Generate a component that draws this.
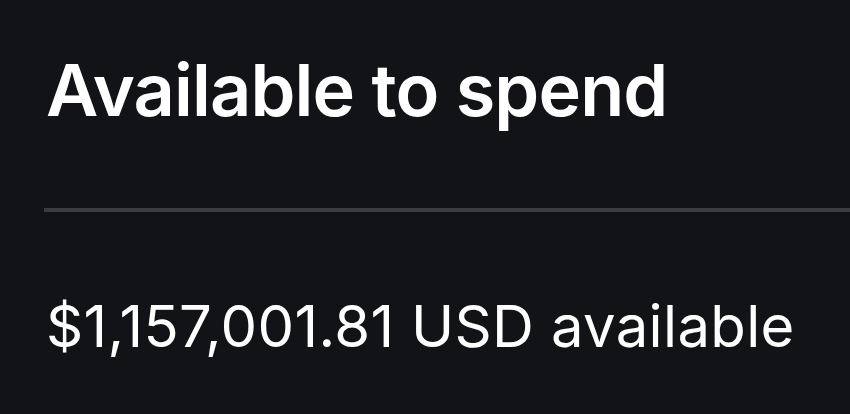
export default function App() {
  return (
    <div className="w-[850px] h-[414px] bg-[#111317] text-white overflow-hidden" style={{ fontFamily: "Inter, sans-serif" }}>
      <div className="pl-[46px] pt-[50px]">
        <h1 className="text-[72px] leading-[80px] font-semibold tracking-[-0.85px]">Available to spend</h1>
      </div>
      <div className="ml-[44px] mt-[78px] h-[4px] bg-[#393c40]" />
      <div className="pl-[46px] mt-[82px]">
        <p className="text-[58px] leading-[64px] font-normal tracking-[0.35px]">$1,157,001.81 USD available</p>
      </div>
    </div>
  );
}
